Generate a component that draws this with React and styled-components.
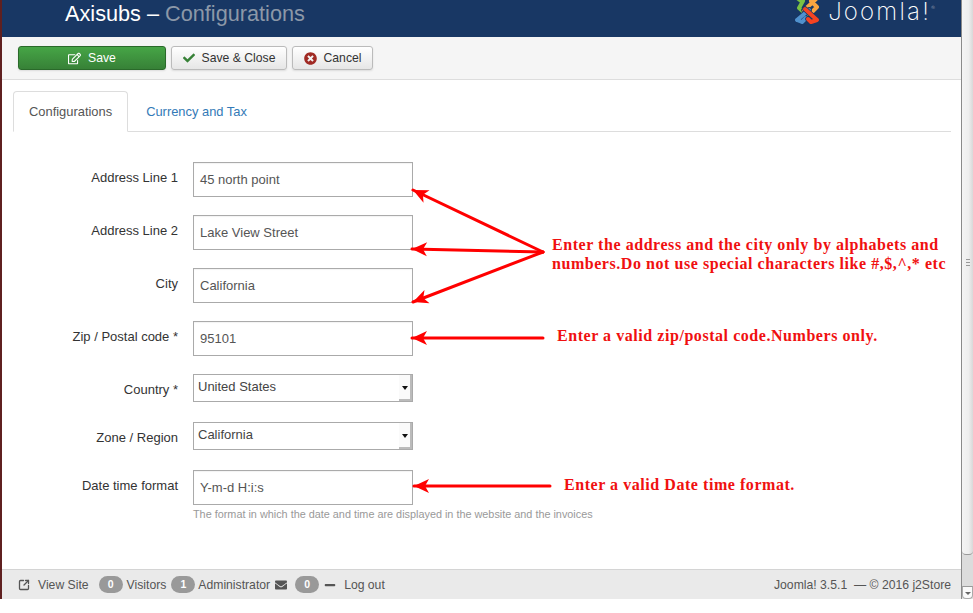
import React from 'react'
import styled, { createGlobalStyle } from 'styled-components'
import { FaRegEdit, FaCheck, FaTimesCircle, FaEnvelope, FaMinus } from 'react-icons/fa'
import { SquareArrowOutUpRight } from 'lucide-react'

const GlobalStyle = createGlobalStyle`
  html, body {
    margin: 0;
    background: #fff;
    font-family: "Liberation Sans", Arial, sans-serif;
    font-size: 13px;
    color: #333;
  }
`

const FIELDS = [
  { label: 'Address Line 1', value: '45 north point' },
  { label: 'Address Line 2', value: 'Lake View Street' },
  { label: 'City', value: 'California' },
  { label: 'Zip / Postal code *', value: '95101' },
  { label: 'Country *', value: 'United States', select: true },
  { label: 'Zone / Region', value: 'California', select: true },
  { label: 'Date time format', value: 'Y-m-d H:i:s', help: 'The format in which the date and time are displayed in the website and the invoices' },
]

const ARROWS = [
  { x1: 543, y1: 252, x2: 413, y2: 190 },
  { x1: 543, y1: 252, x2: 412, y2: 249 },
  { x1: 543, y1: 252, x2: 413, y2: 302 },
  { x1: 543, y1: 338, x2: 412, y2: 338 },
  { x1: 550, y1: 486, x2: 414, y2: 486 },
]

const MARK_ARMS = [
  { color: '#7ac143', d: 'M3 -3 L8 1 M10 1 L6 8 L14 15' },
  { color: '#f9a541', d: 'M24 -2 L19 3 L11 10 M18 1 L24 7 L20 11' },
  { color: '#5091cd', d: 'M4 20 L16 10 M4 20 L9 22 L13 18' },
  { color: '#f44321', d: 'M24 20 L12 9 M24 20 L18 22 L15 19' },
]

const arrowHead = ({ x1, y1, x2, y2 }) => {
  const a = Math.atan2(y1 - y2, x1 - x2)
  const pt = (d, o) => `${x2 + Math.cos(a) * d - Math.sin(a) * o},${y2 + Math.sin(a) * d + Math.cos(a) * o}`
  return [pt(0, 0), pt(15, 7), pt(11, 0), pt(15, -7)].join(' ')
}

const JoomlaMark = () => (
  <svg width="29" height="26" viewBox="0 0 29 26">
    <g fill="none" strokeLinecap="round" strokeLinejoin="round">
      {MARK_ARMS.map(arm => (
        <g key={arm.color}>
          <path d={arm.d} stroke="#183764" strokeWidth="5.5" />
          <path d={arm.d} stroke={arm.color} strokeWidth="4" />
        </g>
      ))}
    </g>
  </svg>
)

const App = () => (
  <Page>
    <GlobalStyle />
    <Main>
      <Header>
        <Title>Axisubs – <Muted>Configurations</Muted></Title>
        <Logo>
          <JoomlaMark />
          <Wordmark>Joomla!<Reg>®</Reg></Wordmark>
        </Logo>
      </Header>
      <Toolbar>
        <ToolButton $primary $width={148}><FaRegEdit size={13} /> Save</ToolButton>
        <ToolButton $width={116}><CheckIcon size={12} /> Save &amp; Close</ToolButton>
        <ToolButton $width={81}><CancelIcon size={13} /> Cancel</ToolButton>
      </Toolbar>
      <Content>
        <Tabs>
          <Tab $active>Configurations</Tab>
          <Tab>Currency and Tax</Tab>
        </Tabs>
        <Form>
          {FIELDS.map(field => (
            <Row key={field.label} $select={field.select}>
              <Label>{field.label}</Label>
              <div>
                {field.select
                  ? <SelectBox>{field.value}<SelectArrow /></SelectBox>
                  : <InputBox>{field.value}</InputBox>}
                {field.help && <Help>{field.help}</Help>}
              </div>
            </Row>
          ))}
        </Form>
      </Content>
      <Footer>
        <FooterGroup>
          <SquareArrowOutUpRight size={12} strokeWidth={2.6} />
          <FooterText $left={8}>View Site</FooterText>
          <Badge $left={10}>0</Badge>
          <FooterText $left={4}>Visitors</FooterText>
          <Badge $left={5}>1</Badge>
          <FooterText $left={3}>Administrator</FooterText>
          <EnvelopeIcon size={12} />
          <Badge $left={8}>0</Badge>
          <MinusIcon size={12} />
          <FooterText $left={8}>Log out</FooterText>
        </FooterGroup>
        <FooterText>Joomla! 3.5.1 &nbsp;— © 2016 j2Store</FooterText>
      </Footer>
    </Main>
    <Scrollbar>
      <Thumb><Grip /></Thumb>
      <Track />
      <ScrollDown />
    </Scrollbar>
    <Overlay width="973" height="599" viewBox="0 0 973 599">
      {ARROWS.map(arrow => (
        <g key={arrow.y2}>
          <line {...arrow} stroke="#f00" strokeWidth="3" strokeLinecap="round" />
          <polygon points={arrowHead(arrow)} fill="#f00" />
        </g>
      ))}
    </Overlay>
    <Note $top={235} $left={552}>
      Enter the address and the city only by alphabets and<br />
      numbers.Do not use special characters like #,$,^,* etc
    </Note>
    <Note $top={326} $left={557}>Enter a valid zip/postal code.Numbers only.</Note>
    <Note $top={475} $left={564}>Enter a valid Date time format.</Note>
  </Page>
)

export default App

const Page = styled.div`
  position: relative;
  display: flex;
  width: 973px;
  height: 599px;
  overflow: hidden;
`

const Main = styled.div`
  flex: 1;
  min-width: 0;
  display: flex;
  flex-direction: column;
  border-left: 2px solid #5f2020;
  border-right: 1px solid #8a8a8a;
`

const Header = styled.header`
  display: flex;
  justify-content: space-between;
  align-items: flex-start;
  height: 37px;
  padding: 0 26px 0 63px;
  background: #183764;
  overflow: hidden;
`

const Title = styled.h1`
  margin: 0;
  font-size: 21.7px;
  font-weight: 400;
  line-height: 28px;
  color: #fff;
`

const Muted = styled.span`
  color: #8c98a8;
`

const Logo = styled.div`
  display: flex;
  align-items: flex-start;
  gap: 6px;
`

const Wordmark = styled.span`
  margin-top: 2px;
  font-family: Inter, sans-serif;
  font-weight: 200;
  font-size: 24px;
  line-height: 19px;
  letter-spacing: 2.2px;
  color: #fff;
`

const Reg = styled.sup`
  font-size: 6px;
  line-height: 0;
  letter-spacing: 0;
  color: #aab;
  vertical-align: 10px;
`

const Toolbar = styled.div`
  display: flex;
  gap: 5px;
  height: 43px;
  box-sizing: border-box;
  padding: 9px 16px 0;
  background: #f5f5f5;
  border-bottom: 1px solid #ddd;
`

const ToolButton = styled.button`
  display: flex;
  align-items: center;
  justify-content: center;
  gap: 7px;
  width: ${props => props.$width}px;
  height: 24px;
  padding: 0;
  font: 12.2px "Liberation Sans", Arial, sans-serif;
  color: ${props => (props.$primary ? '#fff' : '#333')};
  background: ${props => (props.$primary ? 'linear-gradient(#46a546, #378137)' : 'linear-gradient(#fff, #e6e6e6)')};
  border: 1px solid ${props => (props.$primary ? '#2a6a2a' : '#bbb')};
  border-radius: 3px;
  box-shadow: 0 1px 2px rgba(0, 0, 0, 0.1);
`

const CheckIcon = styled(FaCheck)`
  color: #378137;
`

const CancelIcon = styled(FaTimesCircle)`
  color: #a02a24;
`

const Content = styled.main`
  flex: 1;
  background: #fff;
  padding: 11px 10px 0 11px;
`

const Tabs = styled.div`
  display: flex;
  height: 41px;
  box-sizing: border-box;
  border-bottom: 1px solid #ddd;
`

const Tab = styled.div`
  height: 41px;
  box-sizing: border-box;
  padding: 0 ${props => (props.$active ? '15px' : '17px')};
  line-height: 40px;
  font-size: 12.9px;
  color: ${props => (props.$active ? '#555' : '#337ab7')};
  background: ${props => (props.$active ? '#fff' : 'transparent')};
  border: 1px solid ${props => (props.$active ? '#ddd' : 'transparent')};
  border-bottom-color: ${props => (props.$active ? '#fff' : 'transparent')};
  border-radius: 4px 4px 0 0;
`

const Form = styled.div`
  padding-top: 30px;
`

const Row = styled.div`
  display: grid;
  grid-template-columns: 165px 220px;
  column-gap: 15px;
  margin-bottom: ${props => (props.$select ? '20px' : '18px')};
`

const Label = styled.div`
  padding-top: 7px;
  line-height: 18px;
  text-align: right;
  color: #333;
`

const InputBox = styled.div`
  width: 220px;
  height: 35px;
  box-sizing: border-box;
  padding: 0 6px;
  line-height: 34px;
  color: #555;
  border: 1px solid #aaa;
  box-shadow: inset 0 1px 1px rgba(0, 0, 0, 0.05);
`

const SelectBox = styled.div`
  position: relative;
  width: 220px;
  height: 28px;
  box-sizing: border-box;
  padding: 3px 4px 0;
  line-height: 18px;
  color: #444;
  border: 1px solid #aaa;
`

const SelectArrow = styled.span`
  position: absolute;
  top: 0;
  right: 0;
  width: 13px;
  height: 26px;
  box-sizing: border-box;
  background: #fafafa;
  border-right: 2px solid #bbb;
  border-bottom: 2px solid #bbb;

  &::after {
    content: '';
    position: absolute;
    top: 11px;
    left: 3px;
    border: 3px solid transparent;
    border-top: 4px solid #111;
    border-bottom: 0;
  }
`

const Help = styled.div`
  margin-top: 2px;
  font-size: 10.85px;
  line-height: 14px;
  color: #999;
  white-space: nowrap;
`

const Footer = styled.footer`
  display: flex;
  justify-content: space-between;
  align-items: center;
  height: 30px;
  box-sizing: border-box;
  padding: 0 10px 0 16px;
  background: #eaeaea;
  border-top: 1px solid #d4d4d4;
  color: #555;
  font-size: 12.2px;
`

const FooterGroup = styled.div`
  display: flex;
  align-items: center;
`

const FooterText = styled.span`
  margin-left: ${props => props.$left || 0}px;
`

const Badge = styled.span`
  width: 24px;
  height: 17px;
  margin-left: ${props => props.$left}px;
  border-radius: 9px;
  background: #999;
  color: #fff;
  font-size: 10.5px;
  font-weight: bold;
  line-height: 17px;
  text-align: center;
`

const EnvelopeIcon = styled(FaEnvelope)`
  margin-left: 5px;
  color: #555;
`

const MinusIcon = styled(FaMinus)`
  margin-left: 5px;
  color: #555;
`

const Scrollbar = styled.div`
  width: 11px;
  display: flex;
  flex-direction: column;
  background: #e4e4e4;
`

const Thumb = styled.div`
  height: 555px;
  box-sizing: border-box;
  padding-bottom: 30px;
  display: flex;
  align-items: center;
  justify-content: center;
  background: linear-gradient(to right, #f4f4f4, #eee 60%, #d8d8d8);
  border-bottom: 1px solid #999;
  border-radius: 0 0 4px 4px;
`

const Grip = styled.div`
  width: 4px;
  height: 7px;
  background: repeating-linear-gradient(#999 0 1px, #eee 1px 3px);
`

const Track = styled.div`
  flex: 1;
  background: #dcdcdc;
`

const ScrollDown = styled.div`
  position: relative;
  height: 13px;
  background: #fafafa;
  border: 1px solid #aaa;
  border-top: 1px solid #999;
  border-radius: 0 0 4px 4px;
  box-sizing: border-box;

  &::after {
    content: '';
    position: absolute;
    top: 5px;
    left: 2px;
    border: 3px solid transparent;
    border-top: 3px solid #666;
    border-bottom: 0;
  }
`

const Overlay = styled.svg`
  position: absolute;
  top: 0;
  left: 0;
  pointer-events: none;
`

const Note = styled.div`
  position: absolute;
  top: ${props => props.$top}px;
  left: ${props => props.$left}px;
  font-family: "Liberation Serif", "Times New Roman", serif;
  font-size: 16px;
  font-weight: bold;
  line-height: 19px;
  letter-spacing: 0.55px;
  color: #f01010;
  white-space: nowrap;
`
